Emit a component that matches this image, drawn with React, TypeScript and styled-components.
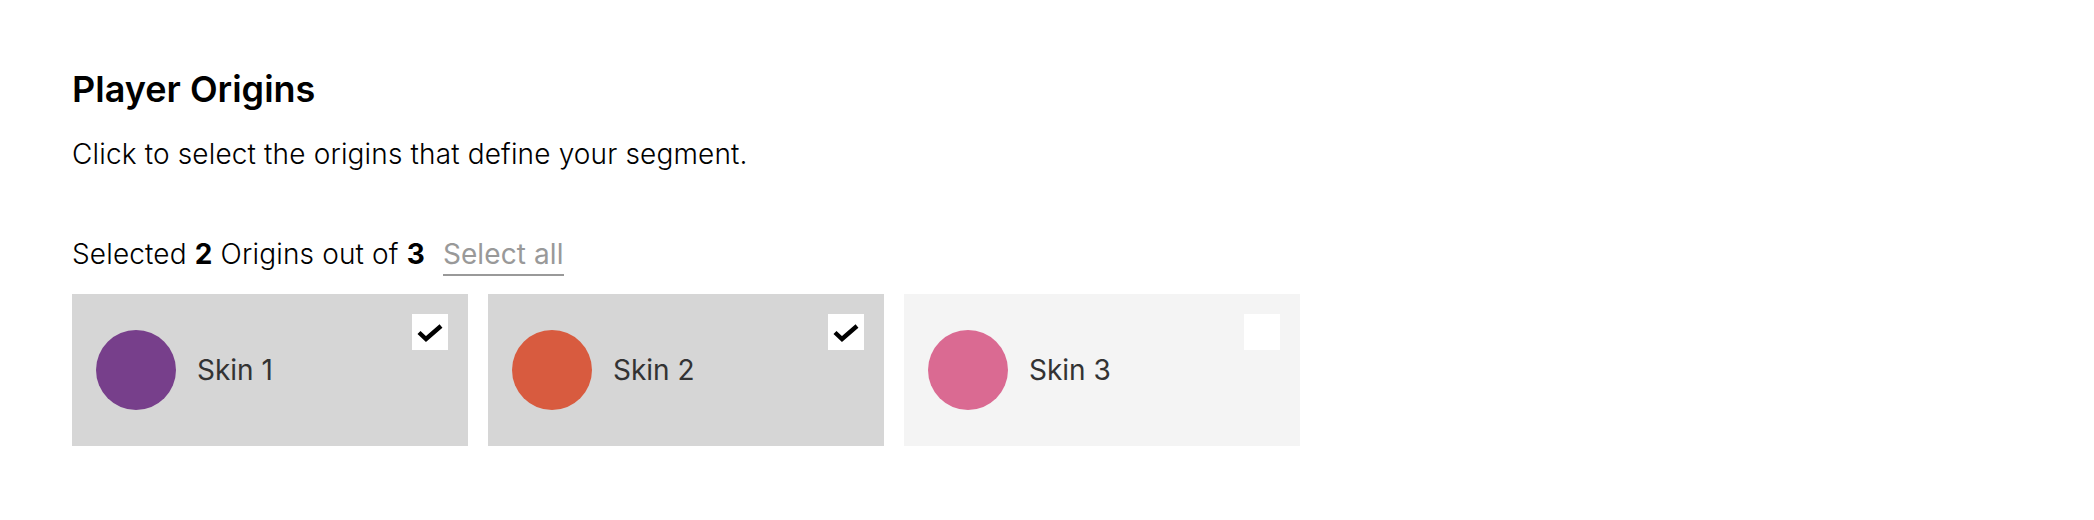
import React, { useState } from "react";
import styled, { createGlobalStyle } from "styled-components";

const GlobalStyle = createGlobalStyle`
  body {
    margin: 0;
    background: #ffffff;
    font-family: Inter, "Noto Sans", sans-serif;
  }
`;

const App = () => {
  const [skins, setSkins] = useState([
    { name: "Skin 1", color: "#773f8b", selected: true },
    { name: "Skin 2", color: "#d85b3f", selected: true },
    { name: "Skin 3", color: "#da6a92", selected: false },
  ]);

  const count = skins.filter((s) => s.selected).length;

  const toggle = (i: number) => {
    setSkins(skins.map((s, idx) => (idx === i ? { ...s, selected: !s.selected } : s)));
  };

  const selectAll = () => setSkins(skins.map((s) => ({ ...s, selected: true })));

  return (
    <div>
      <GlobalStyle />
      <Container>
        <Title>Player Origins</Title>
        <Description>Click to select the origins that define your segment.</Description>
        <Summary>
          Selected <b>{count}</b> Origins out of <b>{skins.length}</b>
          <SelectAll onClick={selectAll}>Select all</SelectAll>
        </Summary>
        <Cards>
          {skins.map((el, i) => (
            <Card key={el.name} $selected={el.selected} onClick={() => toggle(i)}>
              <Swatch $color={el.color} />
              <Label>{el.name}</Label>
              <Check>
                {el.selected && (
                  <svg width="36" height="36" viewBox="0 0 36 36">
                    <polyline
                      points="7,18.5 14,25 29,12"
                      fill="none"
                      stroke="#000"
                      strokeWidth="4.4"
                    />
                  </svg>
                )}
              </Check>
            </Card>
          ))}
        </Cards>
      </Container>
    </div>
  );
};

export default App;

const Container = styled.div`
  padding: 68px 72px 40px;
  display: flex;
  flex-direction: column;
`;

const Title = styled.h1`
  margin: 0;
  font-size: 36px;
  line-height: 43px;
  font-weight: 600;
  color: #000;
`;

const Description = styled.p`
  margin: 26px 0 0;
  font-size: 28px;
  line-height: 34px;
  font-weight: 300;
  letter-spacing: 0.15px;
  color: #000;
`;

const Summary = styled.div`
  margin-top: 66px;
  display: flex;
  align-items: baseline;
  font-size: 28px;
  line-height: 34px;
  font-weight: 300;
  letter-spacing: 0.15px;
  color: #000;
  white-space: pre;

  b {
    font-weight: 700;
  }
`;

const SelectAll = styled.span`
  margin-left: 18px;
  color: #999;
  font-weight: 400;
  letter-spacing: 0.1px;
  border-bottom: 2px solid #999;
  padding-bottom: 3px;
  cursor: pointer;
`;

const Cards = styled.div`
  margin-top: 18px;
  display: flex;
  gap: 20px;
`;

const Card = styled.div<{ $selected: boolean }>`
  position: relative;
  width: 396px;
  height: 152px;
  box-sizing: border-box;
  padding: 0 24px;
  display: flex;
  align-items: center;
  gap: 21px;
  background-color: ${(p) => (p.$selected ? "#d6d6d6" : "#f4f4f4")};
  cursor: pointer;
`;

const Swatch = styled.div<{ $color: string }>`
  width: 80px;
  height: 80px;
  border-radius: 50%;
  background-color: ${(p) => p.$color};
  flex-shrink: 0;
`;

const Label = styled.span`
  font-size: 28px;
  color: #333;
`;

const Check = styled.div`
  position: absolute;
  top: 20px;
  right: 20px;
  width: 36px;
  height: 36px;
  background: #fff;
  svg {
    display: block;
  }
`;
